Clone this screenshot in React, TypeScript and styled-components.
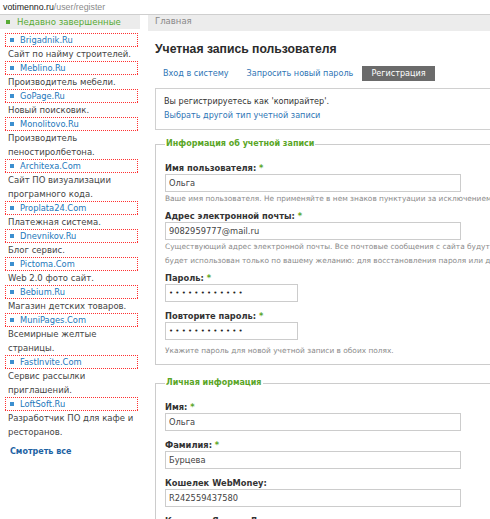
import styled, { createGlobalStyle } from "styled-components";

const GlobalStyle = createGlobalStyle`
  html, body {
    margin: 0;
    padding: 0;
    background: #fff;
    overflow: hidden;
  }
  body {
    font-family: "DejaVu Sans", Verdana, sans-serif;
    color: #333;
  }
`;

const UrlBar = styled.div`
  height: 14px;
  border-bottom: 1px solid #cfcfcf;
  padding-left: 3px;
  font: 8.8px/14px "Liberation Sans", Arial, sans-serif;
  color: #222;

  span {
    color: #8a8a8a;
  }
`;

const Layout = styled.div`
  display: flex;
  align-items: flex-start;
  width: 720px;
`;

// left column with recently finished projects
const Sidebar = styled.aside`
  flex: none;
  width: 140px;
  margin-right: 8px;
  font-size: 8.5px;
`;

const SideHeader = styled.div`
  height: 14px;
  display: flex;
  align-items: center;
  gap: 7px;
  padding-left: 6px;
  background: #ececec;
  color: #58ab35;
  font-size: 8.6px;
`;

const Square = styled.span<{ $color: string }>`
  flex: none;
  width: 4px;
  height: 4px;
  background: ${(p) => p.$color};
`;

const SideList = styled.div`
  padding: 4px 0 0 5px;
`;

// red dotted frame drawn with gradients so the dots stay crisp
const dot = "#ff3030";
const SideLink = styled.a`
  display: flex;
  align-items: center;
  gap: 6px;
  box-sizing: border-box;
  width: 133px;
  height: 14px;
  padding-left: 5px;
  background:
    linear-gradient(90deg, ${dot} 50%, transparent 0) top left / 2px 1px repeat-x,
    linear-gradient(90deg, ${dot} 50%, transparent 0) bottom left / 2px 1px repeat-x,
    linear-gradient(180deg, ${dot} 50%, transparent 0) top left / 1px 2px repeat-y,
    linear-gradient(180deg, ${dot} 50%, transparent 0) top right / 1px 2px repeat-y;
  color: #2277bb;
  font-size: 8.3px;
  text-decoration: none;
`;

const SideText = styled.div`
  padding-left: 3px;
  line-height: 14px;
  color: #444;
  white-space: nowrap;
`;

const MoreLink = styled.a`
  display: block;
  margin: 6px 0 0 5px;
  font-size: 8px;
  line-height: 14px;
  font-weight: bold;
  color: #1d62a3;
  text-decoration: none;
`;

// main column
const Content = styled.main`
  flex: 1;
  min-width: 0;
`;

const Crumbs = styled.div`
  height: 16px;
  padding-left: 7px;
  background: #ececec;
  font-size: 8.5px;
  line-height: 13px;
  color: #888;
  overflow: hidden;
`;

const Inner = styled.div`
  padding-left: 7px;
`;

const Title = styled.h1`
  margin: 10px 0 0;
  font: bold 12.2px/16px "Liberation Sans", Arial, sans-serif;
  color: #2b2b2b;
`;

const Tabs = styled.div`
  display: flex;
  margin: 9px 0 0 -1px;
`;

const Tab = styled.a<{ $active?: boolean }>`
  height: 15px;
  line-height: 15px;
  padding: 0 9px;
  font-size: 8.1px;
  text-decoration: none;
  color: ${(p) => (p.$active ? "#fff" : "#2f75b5")};
  background: ${(p) => (p.$active ? "#6b6b6b" : "transparent")};
`;

const Notice = styled.div`
  margin-top: 7px;
  padding: 5px 8px 7px;
  border: 1px solid #d0d0d0;
  font-size: 8.1px;
  line-height: 14px;
  color: #333;

  a {
    color: #2f75b5;
    text-decoration: none;
  }
`;

const Fieldset = styled.fieldset<{ $top: number }>`
  margin: ${(p) => p.$top}px 0 0;
  padding: 12px 9px 6px;
  min-width: 0;
  border: 1px solid #cccccc;
`;

const Legend = styled.legend`
  padding: 0 1px;
  font-size: 8px;
  font-weight: bold;
  line-height: 12px;
  color: #5aa627;
`;

const Item = styled.div<{ $gap: number }>`
  margin-bottom: ${(p) => p.$gap}px;
`;

const Label = styled.label`
  display: block;
  font-size: 8.3px;
  font-weight: bold;
  line-height: 12px;
  color: #333;

  span {
    color: #5aa627;
  }
`;

const Input = styled.input<{ $w: number }>`
  display: block;
  box-sizing: border-box;
  width: ${(p) => p.$w}px;
  height: 18px;
  margin: 0;
  padding: 0 3px;
  border: 1px solid #cccccc;
  font-family: "DejaVu Sans", Verdana, sans-serif;
  font-size: 8.3px;
  color: #444;
  outline: none;

  &[type="password"] {
    font-size: 7px;
    letter-spacing: 2.2px;
    color: #222;
  }
`;

const Desc = styled.div<{ $top?: number }>`
  margin-top: ${(p) => p.$top ?? 0}px;
  font-size: 7.4px;
  line-height: 14px;
  color: #8a8a8a;
  white-space: nowrap;
`;

const projects: [string, string[]][] = [
  ["Brigadnik.Ru", ["Сайт по найму строителей."]],
  ["Meblino.Ru", ["Производитель мебели."]],
  ["GoPage.Ru", ["Новый поисковик."]],
  ["Monolitovo.Ru", ["Производитель", "пеностиролбетона."]],
  ["Architexa.Com", ["Сайт ПО визуализации", "програмного кода."]],
  ["Proplata24.Com", ["Платежная система."]],
  ["Dnevnikov.Ru", ["Блог сервис."]],
  ["Pictoma.Com", ["Web 2.0 фото сайт."]],
  ["Bebium.Ru", ["Магазин детских товаров."]],
  ["MuniPages.Com", ["Всемирные желтые", "страницы."]],
  ["FastInvite.Com", ["Сервис рассылки", "приглашений."]],
  ["LoftSoft.Ru", ["Разработчик ПО для кафе и", "ресторанов."]],
];

function Field({
  label,
  required,
  value,
  width = 296,
  type = "text",
}: {
  label: string;
  required?: boolean;
  value: string;
  width?: number;
  type?: string;
}) {
  return (
    <>
      <Label>
        {label}
        {required && <span> *</span>}
      </Label>
      <Input $w={width} type={type} readOnly defaultValue={value} />
    </>
  );
}

export default function App() {
  return (
    <>
      <GlobalStyle />
      <UrlBar>
        votimenno.ru<span>/user/register</span>
      </UrlBar>
      <Layout>
        <Sidebar>
          <SideHeader>
            <Square $color="#58ab35" />
            Недавно завершенные
          </SideHeader>
          <SideList>
            {projects.map(([name, lines]) => (
              <div key={name}>
                <SideLink href="#">
                  <Square $color="#3b8fd0" />
                  {name}
                </SideLink>
                {lines.map((line) => (
                  <SideText key={line}>{line}</SideText>
                ))}
              </div>
            ))}
            <MoreLink href="#">Смотреть все</MoreLink>
          </SideList>
        </Sidebar>

        <Content>
          <Crumbs>Главная</Crumbs>
          <Inner>
            <Title>Учетная запись пользователя</Title>
            <Tabs>
              <Tab href="#">Вход в систему</Tab>
              <Tab href="#">Запросить новый пароль</Tab>
              <Tab $active>Регистрация</Tab>
            </Tabs>
            <Notice>
              Вы регистрируетесь как 'копирайтер'.
              <br />
              <a href="#">Выбрать другой тип учетной записи</a>
            </Notice>

            <Fieldset $top={8}>
              <Legend>Информация об учетной записи</Legend>
              <Item $gap={4}>
                <Field label="Имя пользователя:" required value="Ольга" />
                <Desc>
                  Ваше имя пользователя. Не применяйте в нем знаков пунктуации за исключением точек,
                  дефисов, апострофов и подчеркиваний.
                </Desc>
              </Item>
              <Item $gap={4}>
                <Field label="Адрес электронной почты:" required value="9082959777@mail.ru" />
                <Desc>
                  Существующий адрес электронной почты. Все почтовые сообщения с сайта будут
                  отсылаться на этот адрес. Адрес электронной почты не будет показан публично и
                </Desc>
                <Desc>
                  будет использован только по вашему желанию: для восстановления пароля или для
                  получения новостей и уведомлений по электронной почте.
                </Desc>
              </Item>
              <Item $gap={8}>
                <Field label="Пароль:" required type="password" value="123456789012" width={133} />
              </Item>
              <Item $gap={0}>
                <Field
                  label="Повторите пароль:"
                  required
                  type="password"
                  value="123456789012"
                  width={133}
                />
                <Desc $top={4}>Укажите пароль для новой учетной записи в обоих полях.</Desc>
              </Item>
            </Fieldset>

            <Fieldset $top={12}>
              <Legend>Личная информация</Legend>
              <Item $gap={8}>
                <Field label="Имя:" required value="Ольга" />
              </Item>
              <Item $gap={8}>
                <Field label="Фамилия:" required value="Бурцева" />
              </Item>
              <Item $gap={8}>
                <Field label="Кошелек WebMoney:" value="R242559437580" />
              </Item>
              <Item $gap={8}>
                <Field label="Кошелек Яндекс.Деньги:" value="" />
              </Item>
            </Fieldset>
          </Inner>
        </Content>
      </Layout>
    </>
  );
}
